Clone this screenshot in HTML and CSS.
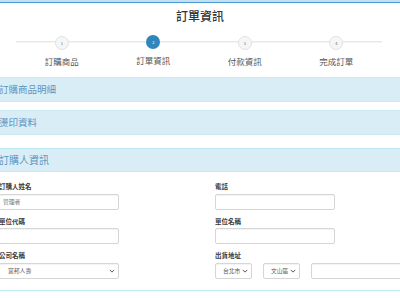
FILE: index.html
```html
<!DOCTYPE html>
<html lang="zh-Hant">
<head>
<meta charset="utf-8">
<link rel="stylesheet" href="styles.css">
</head>
<body>
<div class="topbar"></div>
<h1 class="title">訂單資訊</h1>
<div class="steps">
  <div class="step"><span class="dot">1</span><span class="step-label">訂購商品</span></div>
  <div class="step active"><span class="dot">2</span><span class="step-label">訂單資訊</span></div>
  <div class="step"><span class="dot">3</span><span class="step-label">付款資訊</span></div>
  <div class="step"><span class="dot">4</span><span class="step-label">完成訂單</span></div>
</div>
<div class="content">
  <div class="panel p1"><div class="panel-heading">訂購商品明細</div></div>
  <div class="panel p2"><div class="panel-heading">燙印資料</div></div>
  <div class="panel p3">
    <div class="panel-heading">訂購人資訊</div>
    <div class="panel-body">
      <div class="form-grid">
        <div class="group">
          <label class="lbl">訂購人姓名</label>
          <div class="field"><span class="val">管理者</span></div>
        </div>
        <div class="group">
          <label class="lbl">電話</label>
          <div class="field"></div>
        </div>
        <div class="group">
          <label class="lbl">單位代碼</label>
          <div class="field"></div>
        </div>
        <div class="group">
          <label class="lbl">單位名稱</label>
          <div class="field"></div>
        </div>
        <div class="group">
          <label class="lbl">公司名稱</label>
          <div class="field sel"><span class="val sv">富邦人壽</span><svg class="chev" viewBox="0 0 8 5" width="6" height="4"><path d="M1 1 L4 4 L7 1" fill="none" stroke="#555" stroke-width="1.3"/></svg></div>
        </div>
        <div class="group">
          <label class="lbl">出貨地址</label>
          <div class="addr">
            <div class="field sel small"><span class="val sv">台北市</span><svg class="chev" viewBox="0 0 8 5" width="6" height="4"><path d="M1 1 L4 4 L7 1" fill="none" stroke="#555" stroke-width="1.3"/></svg></div>
            <div class="field sel small"><span class="val sv">文山區</span><svg class="chev" viewBox="0 0 8 5" width="6" height="4"><path d="M1 1 L4 4 L7 1" fill="none" stroke="#555" stroke-width="1.3"/></svg></div>
            <div class="field wide"></div>
          </div>
        </div>
      </div>
    </div>
  </div>
</div>
</body>
</html>
```
FILE: styles.css
```css
html, body {
  margin: 0;
  padding: 0;
  background: #fff;
  overflow: hidden;
}
body {
  width: 400px;
  height: 300px;
  font-family: "Noto Sans CJK TC", "Noto Sans", sans-serif;
  color: #333;
}
.topbar {
  height: 2px;
  background: #c3e0f2;
  border-bottom: 1px solid #4a9ad0;
}
.title {
  margin: 3px 0 0;
  height: 20px;
  line-height: 20px;
  font-size: 12px;
  font-weight: 500;
  text-align: center;
  color: #333;
}
.steps {
  display: grid;
  grid-template-columns: repeat(4, 1fr);
  margin: 0 18px 0 16px;
  padding-top: 9px;
  background: linear-gradient(#e9e9e9, #e9e9e9) no-repeat 0 15px / 100% 1.5px;
}
.step {
  display: flex;
  flex-direction: column;
  align-items: center;
}
.dot {
  width: 12px;
  height: 12px;
  margin-top: 1px;
  border-radius: 50%;
  background: #f6f6f6;
  border: 1px solid #e2e2e2;
  font-size: 4px;
  line-height: 12px;
  text-align: center;
  color: #666;
}
.step.active .dot {
  width: 14px;
  height: 14px;
  margin-top: 0;
  line-height: 14px;
  background: #2f86bd;
  border: 0;
  color: #fff;
}
.step-label {
  margin-top: 5px;
  font-size: 8.5px;
  line-height: 12px;
  color: #555;
}
.content {
  margin: 10px -20px 0 -2px;
}
.panel {
  border: 1px solid #bce8f1;
}
.panel-heading {
  height: 23px;
  line-height: 23px;
  padding: 0;
  background: #d9edf7;
  font-size: 9.5px;
  color: #5a94c0;
}
.p1, .p2 {
  border-color: #c8eaf3;
}
.p2 { margin-top: 8px; }
.p3 { margin-top: 13px; }
.p3 .panel-heading {
  border-bottom: 1px solid #c8eaf3;
  height: 22px;
  line-height: 22px;
  font-size: 10px;
}
.panel-body {
  padding: 10px 0 11px;
}
.form-grid {
  display: grid;
  grid-template-columns: 216px 1fr;
  row-gap: 7px;
}
.lbl {
  display: block;
  font-size: 6.5px;
  line-height: 9px;
  font-weight: 700;
  color: #3a3a3a;
  margin-bottom: 2.5px;
}
.field {
  position: relative;
  box-sizing: border-box;
  width: 120px;
  height: 16px;
  border: 1px solid #d6d6d6;
  border-radius: 2px;
  background: #fff;
  box-shadow: inset 0 1px 1px rgba(0,0,0,0.05);
  display: flex;
  align-items: center;
}
.val {
  font-size: 5.8px;
  color: #777;
  padding-left: 3px;
}
.sv {
  padding-left: 8px;
  color: #555;
}
.chev {
  position: absolute;
  right: 3px;
  top: 5px;
}
.addr {
  display: flex;
  gap: 11px;
}
.field.small {
  width: 37px;
}
.field.small .sv {
  padding-left: 7px;
}
.field.wide {
  width: 120px;
}
```
